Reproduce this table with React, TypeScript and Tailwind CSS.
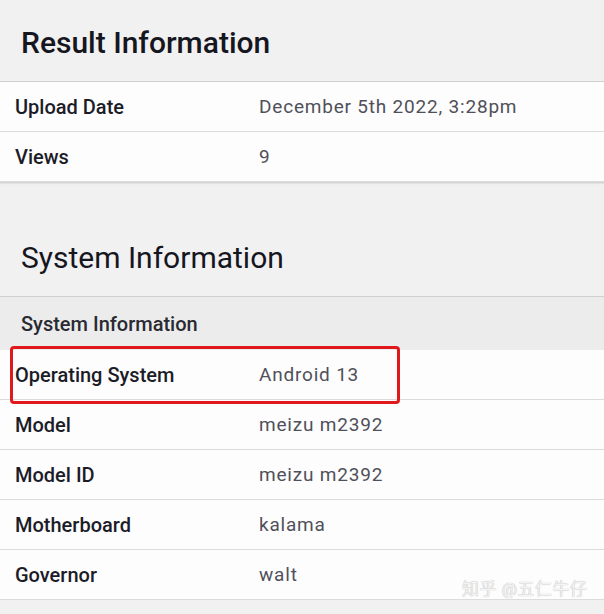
const resultRows = [
  { label: "Upload Date", value: "December 5th 2022, 3:28pm" },
  { label: "Views", value: "9" },
];

const systemRows = [
  { label: "Operating System", value: "Android 13", highlight: true },
  { label: "Model", value: "meizu m2392" },
  { label: "Model ID", value: "meizu m2392" },
  { label: "Motherboard", value: "kalama" },
  { label: "Governor", value: "walt" },
];

function Row({ label, value, highlight }: { label: string; value: string; highlight?: boolean }) {
  return (
    <div className={`relative h-[50px] flex items-center bg-[#fdfdfd] border-b border-[#dcdcdc] ${highlight ? "z-10" : ""}`}>
      <span className="w-[259px] pl-[15px] text-[20px] font-medium text-[#1c1c28]">{label}</span>
      <span className="mt-[2px] text-[19px] text-[#50505a] tracking-[0.8px]">{value}</span>
      {highlight && (
        <div className="absolute left-[10px] top-[-4px] w-[390px] h-[58px] border-[3px] border-[#e0191c] rounded-[4px]" />
      )}
    </div>
  );
}

export default function App() {
  return (
    <div className="relative w-[604px] h-[614px] overflow-hidden bg-[#f1f1f1] font-['Roboto','Noto_Sans_CJK_SC',sans-serif]">
      {/* Result Information */}
      <div className="h-[82px] flex items-center px-[21px] pt-[4px] border-b border-[#cfcfcf]">
        <h2 className="text-[30px] font-medium text-[#16161f]">Result Information</h2>
      </div>
      <div className="border-b border-[#d4d4d4] shadow-[0_1px_1px_rgba(0,0,0,0.06)]">
        {resultRows.map(r => <Row key={r.label} {...r} />)}
      </div>

      {/* System Information */}
      <div className="h-[114px] flex items-end px-[21px] pb-[16px] border-b border-[#d0d0d0]">
        <h2 className="text-[30px] text-[#16161f]">System Information</h2>
      </div>
      <div className="h-[53px] flex items-center px-[21px] bg-[#ececec]">
        <span className="text-[20px] font-medium text-[#2a2a33]">System Information</span>
      </div>
      {systemRows.map(r => <Row key={r.label} {...r} />)}

      {/* watermark */}
      <span className="absolute left-[462px] top-[577px] text-[17px] text-[#f4f4f4] tracking-[0.5px] [text-shadow:0_0_1px_#9a9a9a]">知乎 @五仁牛仔</span>
    </div>
  );
}
